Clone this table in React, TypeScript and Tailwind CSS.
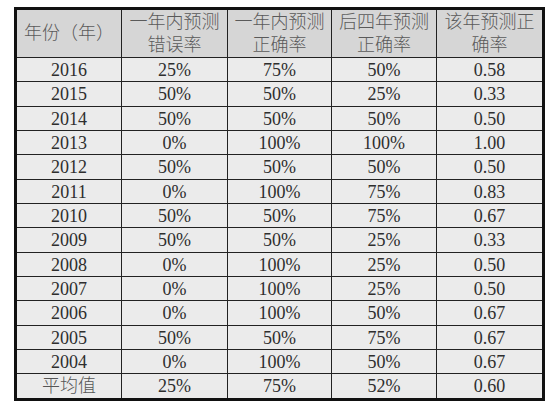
import React from "react";

const rows: string[][] = [
  ["2016", "25%", "75%", "50%", "0.58"],
  ["2015", "50%", "50%", "25%", "0.33"],
  ["2014", "50%", "50%", "50%", "0.50"],
  ["2013", "0%", "100%", "100%", "1.00"],
  ["2012", "50%", "50%", "50%", "0.50"],
  ["2011", "0%", "100%", "75%", "0.83"],
  ["2010", "50%", "50%", "75%", "0.67"],
  ["2009", "50%", "50%", "25%", "0.33"],
  ["2008", "0%", "100%", "25%", "0.50"],
  ["2007", "0%", "100%", "25%", "0.50"],
  ["2006", "0%", "100%", "50%", "0.67"],
  ["2005", "50%", "50%", "75%", "0.67"],
  ["2004", "0%", "100%", "50%", "0.67"],
  ["平均值", "25%", "75%", "52%", "0.60"],
];

const headers: string[][] = [
  ["年份（年）"],
  ["一年内预测", "错误率"],
  ["一年内预测", "正确率"],
  ["后四年预测", "正确率"],
  ["该年预测正", "确率"],
];

const font = {
  fontFamily: '"Liberation Serif", "Noto Sans CJK SC", serif',
};

export default function App() {
  return (
    <div className="w-[552px] h-[410px] bg-white pt-[7px] pl-[14px]" style={font}>
      <div className="w-[531px] border-[3px] border-[#111] bg-[#222] grid grid-cols-[104px_105px_103px_104px_105px] gap-px">
        {headers.map((h, i) => (
          <div
            key={"h" + i}
            className="h-[47px] bg-[#d6d6d6] flex flex-col items-center justify-center text-[18px] leading-[23px] text-[#5a5a5a] font-light"
          >
            {h.map((l, j) => (
              <span key={j}>{l}</span>
            ))}
          </div>
        ))}
        {rows.map((r, i) =>
          r.map((c, j) => (
            <div
              key={i + "-" + j}
              className={
                (i % 3 === 1 ? "h-[24px] " : "h-[23px] ") +
                "bg-[#ebebeb] flex items-center justify-center text-[18px] leading-none text-[#2e2e2e]" +
                (i === 13 && j === 0 ? " text-[#555] font-light" : "")
              }
            >
              {c}
            </div>
          ))
        )}
      </div>
    </div>
  );
}
